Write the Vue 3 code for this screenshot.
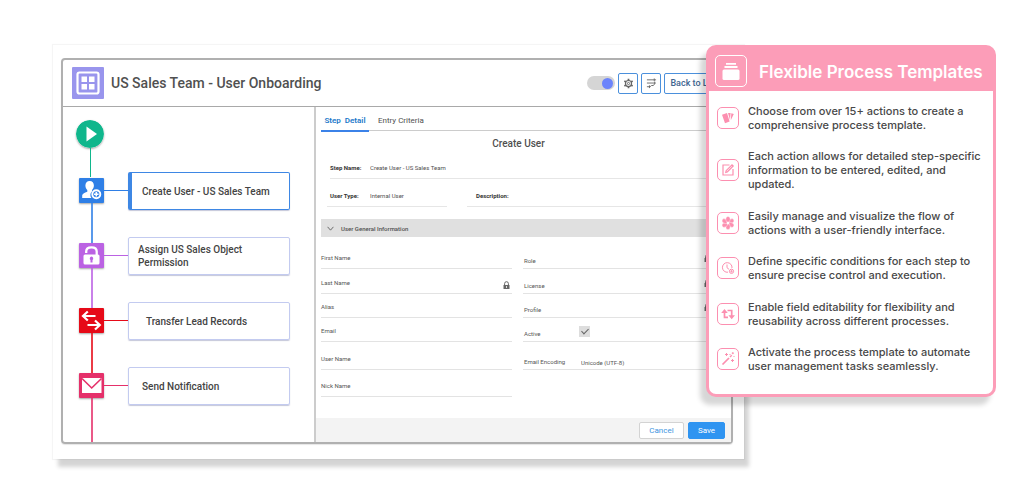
<script setup>
import { ref } from 'vue'

const enabled = ref(true)
const active = ref(true)

const steps = [
  { label: 'Create User - US Sales Team', kind: 'user' },
  { label: 'Assign US Sales Object Permission', kind: 'lock' },
  { label: 'Transfer Lead Records', kind: 'transfer' },
  { label: 'Send Notification', kind: 'mail' },
]

const leftFields = [
  { id: 'first', label: 'First Name' },
  { id: 'last', label: 'Last Name', locked: true },
  { id: 'alias', label: 'Alias' },
  { id: 'email', label: 'Email' },
  { id: 'username', label: 'User Name' },
  { id: 'nick', label: 'Nick Name' },
]

const rightFields = [
  { id: 'role', label: 'Role', locked: true },
  { id: 'license', label: 'License', locked: true },
  { id: 'profile', label: 'Profile', locked: true },
  { id: 'active', label: 'Active', check: true },
  { id: 'encoding', label: 'Email Encoding', value: 'Unicode (UTF-8)' },
]

const features = [
  { icon: 'cards', text: 'Choose from over 15+ actions to create a comprehensive process template.' },
  { icon: 'edit', text: 'Each action allows for detailed step-specific information to be entered, edited, and updated.' },
  { icon: 'flower', text: 'Easily manage and visualize the flow of actions with a user-friendly interface.' },
  { icon: 'clock', text: 'Define specific conditions for each step to ensure precise control and execution.' },
  { icon: 'repeat', text: 'Enable field editability for flexibility and reusability across different processes.' },
  { icon: 'wand', text: 'Activate the process template to automate user management tasks seamlessly.' },
]
</script>

<template>
  <main class="stage">
    <section class="sheet">
      <div class="window">
        <header class="bar">
          <span class="logo">
            <svg viewBox="0 0 32 32" width="32" height="32">
              <rect x="5.5" y="5.5" width="21" height="21" rx="2" fill="none" stroke="#fff" stroke-width="2.2" />
              <path d="M9.500 9.500h5.500v5.500H9.500zM17 9.500h5.500v5.500H17zM9.500 17h5.500v5.500H9.500zM17 17h5.500v5.500H17z" fill="#fff" />
            </svg>
          </span>
          <h1>US Sales Team - User Onboarding</h1>
          <input v-model="enabled" class="toggle" type="checkbox" aria-label="Process enabled" />
          <button class="tool" type="button" aria-label="Settings">
            <svg viewBox="0 0 12 12" width="11" height="11">
              <circle cx="6" cy="6" r="3.3" fill="none" stroke="#666" stroke-width="1.3" />
              <circle cx="6" cy="6" r="1.2" fill="none" stroke="#666" />
              <path d="M6 .8v2M6 9.200v2M1.500 3.400l1.700 1M8.800 7.600l1.700 1M1.500 8.600l1.700-1M8.800 4.400l1.700-1" stroke="#666" stroke-width="1.900" />
            </svg>
          </button>
          <button class="tool" type="button" aria-label="Flow">
            <svg viewBox="0 0 12 12" width="11" height="11" fill="none" stroke="#666">
              <path d="M1 2h10M9 .5v3M1 5.500h9.500M9.500 4v2.500L7.500 8.500M1 9.500h3.500l1.500-1.300h2M3.800 8v3" />
            </svg>
          </button>
          <button class="tool back" type="button">Back to List</button>
        </header>

        <div class="body">
          <nav class="flow" aria-label="Process steps">
            <div class="start">
              <svg viewBox="0 0 28 28" width="28" height="28">
                <circle cx="14" cy="14" r="14" fill="#10b68c" />
                <path d="M10.500 6.500v15L21 14z" fill="#fff" />
              </svg>
              <i class="line"></i>
            </div>
            <ol>
              <li v-for="s in steps" :key="s.kind" :class="s.kind">
                <div class="rail">
                  <span class="badge">
                    <svg viewBox="0 0 25 25" width="25" height="25">
                      <g v-if="s.kind === 'user'">
                        <path d="M10.700 3c2.700 0 4.200 2 4.200 4.500 0 2.200-1.100 3.600-1.900 4.500v1.600c-1 1-1.600 2-1.600 3.500 0 1.200.3 2.200 1 3H3.200v-2.400c0-1.700 1.200-2.300 5.100-4V12c-.9-.9-1.900-2.300-1.900-4.500C6.400 5 8 3 10.700 3z" fill="#fff" />
                        <circle cx="17.300" cy="16.300" r="4" fill="#2f7fe6" stroke="#fff" stroke-width="1.900" />
                        <path d="M17.300 14v4.600M15 16.300h4.600" stroke="#fff" stroke-width="1.600" />
                      </g>
                      <g v-else-if="s.kind === 'lock'">
                        <path d="M7.200 10V8.500C7.200 5.800 9.500 4.300 12.500 4.300s5.200 1.500 5.200 4.200V12" fill="none" stroke="#fff" stroke-width="2.300" />
                        <rect x="4.500" y="11.500" width="16" height="10" rx="1.500" fill="#fff" />
                        <path d="M12.500 13.600a1.900 1.900 0 0 1 1 3.400v2.500h-2V17a1.900 1.900 0 0 1 1-3.400z" fill="#bb62e3" />
                      </g>
                      <g v-else-if="s.kind === 'transfer'" fill="none" stroke="#fff" stroke-width="2.200">
                        <path d="M16.500 8H4.500M8.800 3.500L4 8l4.800 4.500M8.500 17h12M16 12.500l4.800 4.500-4.800 4.500" />
                      </g>
                      <g v-else>
                        <rect x="3" y="5" width="19.500" height="15" fill="#fff" />
                        <path d="M3 5.500l9.700 9.500L22.500 5.500" fill="none" stroke="#e5306a" stroke-width="1.600" />
                      </g>
                    </svg>
                  </span>
                  <i class="line"></i>
                </div>
                <i class="link"></i>
                <a class="step" href="#detail">{{ s.label }}</a>
              </li>
            </ol>
          </nav>

          <form id="detail" class="detail" @submit.prevent>
            <div class="tabs">
              <button class="tab on" type="button">Step&nbsp; Detail</button>
              <button class="tab" type="button">Entry Criteria</button>
            </div>
            <div class="content">
              <h2>Create User</h2>
              <div class="info name">
                <label for="step-name">Step Name:</label>
                <input id="step-name" value="Create User - US Sales Team" />
              </div>
              <div class="pair">
                <div class="info type">
                  <label for="user-type">User Type:</label>
                  <input id="user-type" value="Internal User" />
                </div>
                <div class="info desc">
                  <label for="desc">Description:</label>
                  <input id="desc" />
                </div>
              </div>
              <button class="section" type="button">
                <svg viewBox="0 0 8 6" width="7" height="5"><path d="M.500 1L4 5l3.500-4" fill="none" stroke="#555" /></svg>
                User General Information
              </button>
              <div class="fields">
                <div class="col left">
                  <div v-for="f in leftFields" :key="f.id" class="field">
                    <label :for="f.id">{{ f.label }}</label>
                    <input :id="f.id" />
                    <svg v-if="f.locked" class="lock-icon" viewBox="0 0 7 9" width="7" height="9">
                      <path d="M1.600 4V2.600a1.900 1.900 0 0 1 3.800 0V4" fill="none" stroke="#666" /><path d="M.500 4h6v4h-6z" fill="#666" /><path d="M3.500 5v2" stroke="#ddd" />
                    </svg>
                  </div>
                </div>
                <div class="col right">
                  <div v-for="f in rightFields" :key="f.id" class="field">
                    <label :for="f.id">{{ f.label }}</label>
                    <input v-if="f.check" :id="f.id" v-model="active" class="check" type="checkbox" />
                    <input v-else :id="f.id" :value="f.value" />
                    <svg v-if="f.locked" class="lock-icon" viewBox="0 0 7 9" width="7" height="9">
                      <path d="M1.600 4V2.600a1.900 1.900 0 0 1 3.800 0V4" fill="none" stroke="#666" /><path d="M.500 4h6v4h-6z" fill="#666" /><path d="M3.500 5v2" stroke="#ddd" />
                    </svg>
                  </div>
                </div>
              </div>
            </div>
            <footer class="actions">
              <button class="cancel" type="button">Cancel</button>
              <button class="save" type="submit">Save</button>
            </footer>
          </form>
        </div>
      </div>
    </section>

    <aside class="card">
      <header>
        <span class="card-logo">
          <svg viewBox="0 0 30 30" width="30" height="30" fill="#fff">
            <path d="M10 7h10v1.800H10zM8.500 10h13v2h-13z" /><rect x="6.500" y="13.500" width="17" height="10.500" rx="1.500" />
          </svg>
        </span>
        <h2>Flexible Process Templates</h2>
      </header>
      <ul>
        <li v-for="f in features" :key="f.icon">
          <span class="tile">
            <svg viewBox="0 0 20 20" width="20" height="20">
              <g v-if="f.icon === 'cards'" fill="#fc8fb0">
                <path d="M4 6.700l5-1.700 2.600 8.500-4.600 1.700zM10 5h2.600l-.6 7zM13.300 5.200l2.500.8-3 6.200z" />
              </g>
              <g v-else-if="f.icon === 'edit'" fill="none" stroke="#fc8fb0" stroke-width="1.200">
                <path d="M11.500 5H5v10h10V9M7.800 12.300l.3-1.600L14 4.800l1.200 1.200-5.900 5.900z" />
              </g>
              <g v-else-if="f.icon === 'flower'" fill="#fc8fb0" stroke="#fff" stroke-width=".4">
                <ellipse v-for="n in 6" :key="n" cx="10" cy="6.300" rx="2.200" ry="2.900" :transform="`rotate(${n * 60} 10 10)`" />
                <circle cx="10" cy="10" r="1" fill="#fff" />
              </g>
              <g v-else-if="f.icon === 'clock'" fill="none" stroke="#fc8fb0">
                <path d="M10 14.200A4.800 4.800 0 1 1 14 10M9 6.500v3.200l2 1.600" />
                <circle cx="13.500" cy="13.300" r="2.100" /><path d="M13.500 12v2.600M12.200 13.300h2.600" stroke-width=".8" />
              </g>
              <g v-else-if="f.icon === 'repeat'">
                <path d="M6.500 8v5.300H10M9.500 6.500h4.200V12" fill="none" stroke="#fc8fb0" stroke-width="1.700" />
                <path d="M3.200 9L6.500 5l3.300 4zM10.400 11.300L13.700 15.300 17 11.300z" fill="#fc8fb0" />
              </g>
              <g v-else fill="none" stroke="#fc8fb0">
                <path d="M4.500 15.500l6.500-6.500" stroke-width="1.700" /><path d="M12 8l1.800-1.800" stroke-width="1.300" />
                <path d="M8.500 4v3M7 5.500h3M14.500 10v3M13 11.500h3M14.800 3.200v2M13.800 4.200h2M11.500 5.500h1M15.500 7.500h1" />
              </g>
            </svg>
          </span>
          <p>{{ f.text }}</p>
        </li>
      </ul>
    </aside>
  </main>
</template>

<style>
body { background: #fff; }
</style>

<style scoped>
* { box-sizing: border-box; }
.stage {
  position: relative;
  display: grid;
  grid-template-columns: minmax(0, 1fr);
  padding: 45px 280px 45px 53px;
  font-family: Roboto, "Liberation Sans", sans-serif;
  color: #505050;
}
h1, h2, p, ul, ol { margin: 0; padding: 0; list-style: none; }
button, input { font: inherit; color: inherit; margin: 0; padding: 0; border: 0; background: none; }
button { cursor: pointer; }
input { min-width: 0; outline: 0; }
svg { display: block; flex: none; }

.sheet {
  padding: 13px 11px 15px 8px;
  background: #fff;
  box-shadow: 0 0 1px 1px rgba(0, 0, 0, .04), 5px 8px 4px rgba(0, 0, 0, .17);
}
.window {
  border: 2px solid #b0b0b0;
  border-radius: 4px;
  box-shadow: 0 1px 1px rgba(0, 0, 0, .1);
}
.bar {
  display: flex;
  align-items: center;
  gap: 3px;
  height: 47px;
  padding: 0 7px 0 9px;
  border-bottom: 1px solid #a9a9a9;
}
.logo { background: #9995ed; border-radius: 1px; }
h1 { margin: 0 auto 0 4px; font-size: 14px; font-weight: 500; line-height: 20px; white-space: nowrap; }
.toggle {
  appearance: none;
  display: flex;
  align-items: center;
  justify-content: flex-start;
  width: 28px;
  height: 14px;
  padding: 0 2px;
  border-radius: 7px;
  background: #d5d5d5;
}
.toggle:checked { justify-content: flex-end; }
.toggle::before { content: ""; width: 11px; height: 11px; border-radius: 50%; background: #6c84fb; }
.tool {
  display: flex;
  align-items: center;
  justify-content: center;
  width: 20px;
  height: 21px;
  border: 1px solid #4b90dc;
  border-radius: 2px;
}
.back { width: 60px; color: #41658f; font-size: 9px; font-weight: 500; white-space: nowrap; }

.body { display: grid; grid-template-columns: 253px minmax(0, 1fr); }
.flow { display: flex; flex-direction: column; padding: 13px 0 0 13px; border-right: 2px solid #ccc; }
.start { display: flex; flex-direction: column; align-items: center; width: 28px; height: 52px; }
.start svg { border-radius: 50%; box-shadow: 0 1px 2px rgba(0, 0, 0, .35); }
.line { flex: 1; width: 2px; background: var(--tone, #10b68c); }
.start .line { width: 1px; margin-bottom: -5px; }
ol { display: flex; flex: 1; flex-direction: column; padding-left: 3px; }
ol li { display: flex; align-items: flex-start; height: 65px; }
ol li:last-child { flex: 1; }
.user { --tone: #2f7fe6; }
.lock { --tone: #bb62e3; }
.transfer { --tone: #e60a18; }
.mail { --tone: #e5306a; }
.rail { display: flex; flex-direction: column; align-items: center; align-self: stretch; width: 25px; margin: 6px 0 -6px; }
.mail .rail { margin-bottom: 0; }
.badge { background: var(--tone); border-radius: 1px; box-shadow: 0 1px 2px rgba(0, 0, 0, .35); }
.rail .line { opacity: .8; }
.link { width: 24px; height: 1px; margin-top: 18px; background: var(--tone); }
.step {
  display: flex;
  align-items: center;
  width: 162px;
  height: 38px;
  padding: 0 10px 0 9px;
  border: 1px solid #c3cbf0;
  border-radius: 2px;
  box-shadow: 0 1px 1px rgba(60, 70, 130, .3);
  color: #444;
  font-size: 10px;
  font-weight: 500;
  line-height: 13px;
  text-decoration: none;
}
.user .step { padding-left: 10px; border-color: #3e87e4; border-left-width: 4px; }
.transfer .step { padding-left: 17px; }
.mail .step { padding-left: 13px; }

.detail { display: flex; flex-direction: column; font-size: 6px; }
.tabs { display: flex; margin: 0 0 0 5px; height: 24px; border-bottom: 1px solid #ccc; }
.tab { padding: 4px 0 0; margin-left: 9px; font-size: 8px; }
.tab.on { width: 48px; height: 25px; margin: 0; border-bottom: 2px solid #3b82e8; color: #1b79c9; font-weight: 600; white-space: nowrap; }
.content { padding: 0 15px 21px 5px; }
.content h2 { padding-top: 6px; font-size: 10px; font-weight: 500; line-height: 14px; text-align: center; }
.info { display: flex; align-items: center; height: 28px; padding-top: 5px; border-bottom: 1px solid #e6e6e6; }
.info label { width: 40px; color: #333; font-weight: 700; white-space: nowrap; }
.info input { flex: 1; }
.name { margin-left: 9px; }
.pair { display: grid; grid-template-columns: 120px minmax(0, 1fr); gap: 20px; margin-left: 6px; }
.type { padding-left: 3px; }
.desc { padding-left: 9px; }
.section {
  display: flex;
  align-items: center;
  gap: 7px;
  width: 100%;
  height: 18px;
  margin-top: 12px;
  padding-left: 6px;
  background: #e0e0e0;
  font-weight: 500;
}
.fields { display: grid; grid-template-columns: minmax(0, 191fr) minmax(0, 193fr); gap: 11px; }
.col { display: grid; grid-template-rows: 32px 25px 24px 24px 28px 27px; }
.field { display: flex; align-items: flex-end; padding-bottom: 5px; border-bottom: 1px solid #e3e3e3; color: #555; }
.field label { flex: none; line-height: 10px; white-space: nowrap; }
.field input { flex: 1; height: 10px; }
.right .field { padding: 0 0 2px 1px; }
.right label { width: 57px; }
.lock-icon { margin-right: 2px; align-self: flex-end; }
.left .lock-icon { margin-bottom: -2px; }
.right .lock-icon { margin-bottom: 3px; margin-right: 5px; }
.field .check {
  appearance: none;
  flex: none;
  display: grid;
  place-items: center;
  width: 11px;
  height: 11px;
  margin: 0 0 2px -2px;
  background: #ddd;
}
.check:checked::before {
  content: "";
  width: 3px;
  height: 6px;
  margin-top: -2px;
  border: solid #666;
  border-width: 0 1px 1px 0;
  transform: rotate(45deg);
}
.actions { display: flex; align-items: center; justify-content: flex-end; gap: 4px; height: 24px; margin-top: auto; padding-right: 6px; background: #f3f3f3; }
.actions button { height: 17px; border: 1px solid #d3d3d3; border-radius: 2px; font-size: 8px; }
.cancel { width: 45px; background: #fff; color: #3f95df; }
.actions .save { width: 37px; border-color: #2f94f1; background: #2f94f1; color: #fff; }

.card {
  position: absolute;
  top: 45px;
  right: 28px;
  display: flex;
  flex-direction: column;
  width: 290px;
  min-height: 352px;
  border: 3px solid #fc9db8;
  border-radius: 10px;
  background: #fff;
  box-shadow: -6px 8px 5px rgba(0, 0, 0, .16);
  font-family: Inter, "Liberation Sans", sans-serif;
}
.card header { display: flex; align-items: center; gap: 12px; height: 43px; padding: 7px 6px 5px; background: #fc9db8; }
.card-logo { border: 1px solid #fff; border-radius: 5px; }
.card h2 { padding-top: 2px; color: #fff; font-size: 17px; font-weight: 600; white-space: nowrap; }
.card ul { display: flex; flex: 1; flex-direction: column; justify-content: space-between; padding: 13px 8px 21px; }
.card li { display: flex; align-items: center; gap: 9px; }
.tile { flex: none; border: 1px solid #fc8fb0; border-radius: 5px; }
.card p { font-size: 11px; font-weight: 500; line-height: 14px; color: #484848; }
</style>
